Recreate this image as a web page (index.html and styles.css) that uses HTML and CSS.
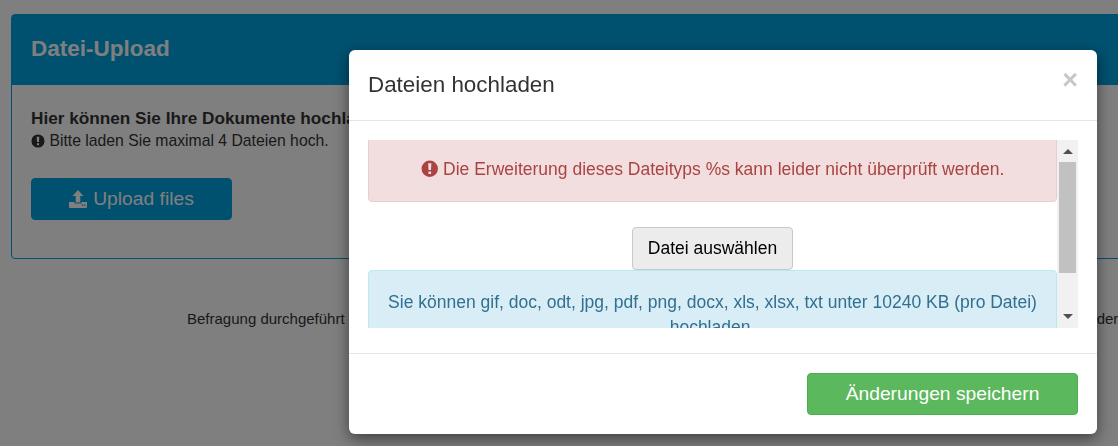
FILE: index.html
```html
<!DOCTYPE html>
<html lang="de">
<head>
<meta charset="utf-8">
<title>Datei-Upload</title>
<link rel="stylesheet" href="styles.css">
</head>
<body>
<main class="page">
  <section class="panel">
    <header class="panel-head"><h1>Datei-Upload</h1></header>
    <div class="panel-body">
      <p class="lead">Hier können Sie Ihre Dokumente hochladen</p>
      <p class="note">
        <svg class="icon" viewBox="0 0 16 16"><path fill-rule="evenodd" d="M8 .5a7.500 7.500 0 1 0 0 15 7.500 7.500 0 0 0 0-15ZM6.500 3h3l-.4 6.200H6.900ZM6.800 10.500h2.400v2.400H6.800Z"/></svg>
        Bitte laden Sie maximal 4 Dateien hoch.
      </p>
      <button class="upload-btn" type="button">
        <svg class="icon upload-icon" viewBox="0 0 18 18"><path fill-rule="evenodd" d="M9 0l5.500 6H11.300v6.500H6.700V6H3.500ZM0 12h5.500v1.500h7V12H18v5a1 1 0 0 1-1 1H1a1 1 0 0 1-1-1ZM12.800 14.600v1.200h1.400v-1.200ZM15 14.600v1.200h1.400v-1.200Z"/></svg>
        Upload files
      </button>
    </div>
  </section>
  <p class="foot">Befragung durchgeführt mit dem Online-Umfragesystem des Anbieters und unter Beachtung aller geltenden gesetzlichen Bestimmungen der</p>
</main>
<div class="backdrop"></div>
<div class="modal">
  <header class="modal-head">
    <h2>Dateien hochladen</h2>
    <span class="close">×</span>
  </header>
  <div class="modal-body">
    <div class="scroller">
      <div class="scroll-content">
        <div class="alert alert-danger">
          <svg class="icon" viewBox="0 0 16 16"><path fill-rule="evenodd" d="M8 .5a7.500 7.500 0 1 0 0 15 7.500 7.500 0 0 0 0-15ZM6.500 3h3l-.4 6.200H6.900ZM6.800 10.500h2.400v2.400H6.800Z"/></svg>
          Die Erweiterung dieses Dateityps %s kann leider nicht überprüft werden.
        </div>
        <div class="file-row"><button class="file-btn" type="button">Datei auswählen</button></div>
        <div class="alert alert-info">Sie können gif, doc, odt, jpg, pdf, png, docx, xls, xlsx, txt unter 10240 KB (pro Datei) hochladen.</div>
      </div>
      <div class="scrollbar">
        <span class="arrow arrow-up"></span>
        <span class="thumb"></span>
        <span class="arrow arrow-down"></span>
      </div>
    </div>
  </div>
  <footer class="modal-foot"><button class="save-btn" type="button">Änderungen speichern</button></footer>
</div>
</body>
</html>
```
FILE: styles.css
```css
* { box-sizing: border-box; }
html, body { margin: 0; height: 100%; overflow: hidden; }
body { background: #fff; color: #333; font: 17.5px/1.42857 "Liberation Sans", Arial, sans-serif; }
p, h1, h2 { margin: 0; }
button { font-family: inherit; cursor: pointer; }
.icon { width: 1em; height: 1em; fill: currentColor; vertical-align: -2px; }

.page { width: 1140px; padding: 14px 0 0 11px; }
.panel { border: 1px solid #00a2e0; border-radius: 4px; width: 1129px; height: 245px; }
.panel-head { background: #00a2e0; height: 70px; padding: 0 19px 2px; display: flex; align-items: center; }
.panel-head h1 { color: #fff; font-size: 22.5px; font-weight: 700; }
.panel-body { padding: 23px 19px 0; }
.lead { font-size: 17.2px; font-weight: 700; color: #333; line-height: 20px; white-space: nowrap; }
.note { font-size: 15.75px; line-height: 20px; margin-top: 3px; }
.note .icon { width: 14px; height: 14px; }
.upload-btn { display: flex; align-items: center; justify-content: center; gap: 6px; width: 201px; height: 42px; margin-top: 27px; background: #00a2e0; color: #fff; border: 1px solid #00a2e0; border-radius: 4px; font-size: 19.25px; }
.upload-icon { width: 18px; height: 18px; }
.foot { margin: 50px 0 0 176px; font-size: 15px; white-space: nowrap; line-height: 20px; color: #333; }

.backdrop { position: fixed; inset: 0; background: rgba(0,0,0,.5); }
.modal { position: absolute; left: 349px; top: 50px; width: 748px; height: 384px; background: #fff; border-radius: 6px; box-shadow: 0 5px 15px rgba(0,0,0,.5); display: flex; flex-direction: column; }
.modal-head { height: 71px; padding: 0 19px; border-bottom: 1px solid #e5e5e5; display: flex; align-items: center; justify-content: space-between; }
.modal-head h2 { font-size: 22.4px; font-weight: 400; color: #333; }
.close { font-size: 27px; font-weight: 700; color: #c8c8c8; line-height: 1; margin-bottom: 10px; }
.modal-body { height: 233px; padding: 19px 19px 0; border-bottom: 1px solid #e5e5e5; }
.scroller { height: 188px; display: flex; overflow: hidden; }
.scroll-content { flex: 1; min-width: 0; overflow: hidden; margin-top: -20px; }
.alert { border: 1px solid; border-radius: 4px; text-align: center; padding: 19px; }
.alert-danger { height: 82px; background: #f2dede; border-color: #ebccd1; color: #a94442; padding-top: 36px; }
.alert-info { background: #d9edf7; border-color: #bce8f1; color: #31708f; height: 100px; }
.file-row { display: flex; justify-content: center; margin-top: 25px; }
.file-btn { width: 161px; height: 43px; background: #ececec; border: 1px solid #c8c8c8; border-radius: 4px; color: #000; font-size: 17.5px; }
.scrollbar { width: 21px; background: #f1f1f1; display: flex; flex-direction: column; align-items: center; }
.thumb { width: 17px; height: 111px; background: #c1c1c1; margin-top: 8px; }
.arrow { width: 0; height: 0; border-left: 5px solid transparent; border-right: 5px solid transparent; }
.arrow-up { border-bottom: 5px solid #505050; margin-top: 9px; }
.arrow-down { border-top: 5px solid #505050; margin-top: auto; margin-bottom: 9px; }
.modal-foot { flex: 1; display: flex; align-items: flex-start; justify-content: flex-end; padding: 19px 19px 0; }
.save-btn { width: 271px; height: 42px; background: #5cb85c; border: 1px solid #4cae4c; border-radius: 4px; color: #fff; font-size: 19.25px; }
```
